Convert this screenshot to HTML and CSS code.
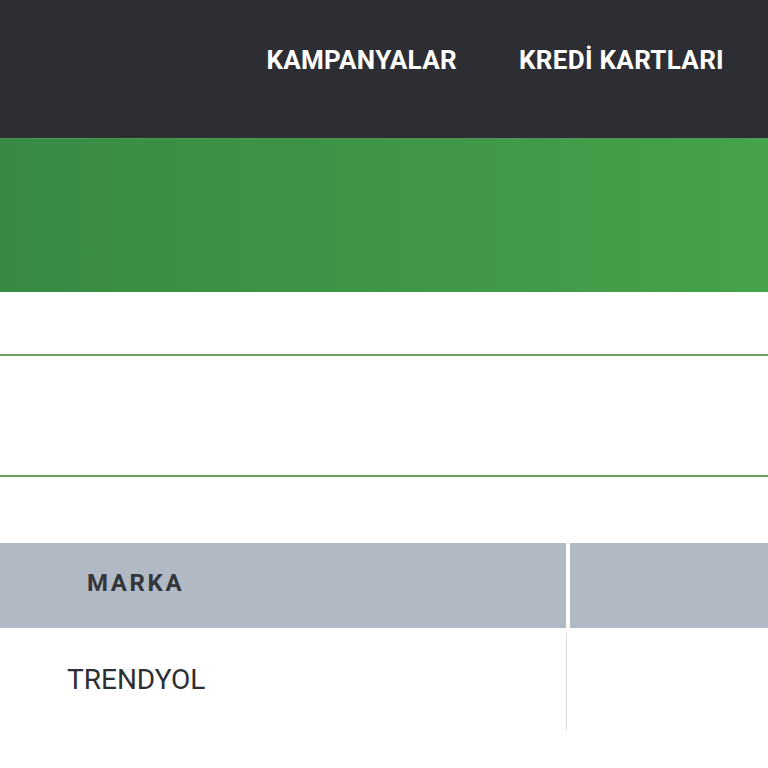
FILE: index.html
```html
<!DOCTYPE html>
<html lang="tr">
<head>
    <meta charset="UTF-8">
    <title>Kampanyalar</title>
    <meta name="viewport" content="width=device-width, initial-scale=1.0">
    <link rel="stylesheet" href="styles.css">
</head>
<body>

<header class="top-bar">
    <nav class="main-nav">
        <a href="#">KAMPANYALAR</a>
        <a href="#">KREDİ KARTLARI</a>
    </nav>
</header>

<div class="hero-band"></div>

<div class="filter-area">
    <div class="filter-row"></div>
</div>

<div class="brand-table">
    <div class="table-head">
        <div class="head-cell">MARKA</div>
        <div class="head-cell"></div>
    </div>
    <div class="table-row">
        <div class="body-cell">TRENDYOL</div>
        <div class="body-cell"></div>
    </div>
</div>

</body>
</html>
```

FILE: styles.css
```css
body {
    margin: 0;
    font-family: Roboto, "Liberation Sans", sans-serif;
    background-color: #fff;
}

.top-bar {
    background-color: #2d2e33;
    height: 138px;
    display: flex;
    align-items: center;
    justify-content: flex-end;
    padding-right: 44px;
}

.main-nav {
    display: flex;
    gap: 62px;
    margin-top: -18px;
}

.main-nav a {
    color: #fff;
    text-decoration: none;
    font-weight: bold;
    font-size: 26px;
    letter-spacing: 0.3px;
}

.hero-band {
    height: 154px;
    background: linear-gradient(to right, #388a42, #46a24b);
    border-top: 1px solid #4a9a52;
    box-sizing: border-box;
}

.filter-area {
    padding-top: 62px;
    padding-bottom: 66px;
}

.filter-row {
    height: 119px;
    border-top: 2px solid #6a9f5c;
    border-bottom: 2px solid #6a9f5c;
}

.table-head {
    display: grid;
    grid-template-columns: 566px 1fr;
    gap: 4px;
    height: 85px;
}

.head-cell {
    background-color: #b1b9c4;
    color: #33363b;
    font-weight: bold;
    font-size: 24px;
    letter-spacing: 2.6px;
    display: flex;
    align-items: center;
    padding-left: 87px;
    padding-bottom: 6px;
}

.table-row {
    display: grid;
    grid-template-columns: 566px 1fr;
    height: 98px;
    padding-top: 5px;
}

.body-cell {
    display: flex;
    align-items: center;
    padding-left: 67px;
    padding-bottom: 6px;
    font-size: 28px;
    color: #2e2f33;
}

.body-cell + .body-cell {
    border-left: 1px solid #dcdcdc;
}
```
